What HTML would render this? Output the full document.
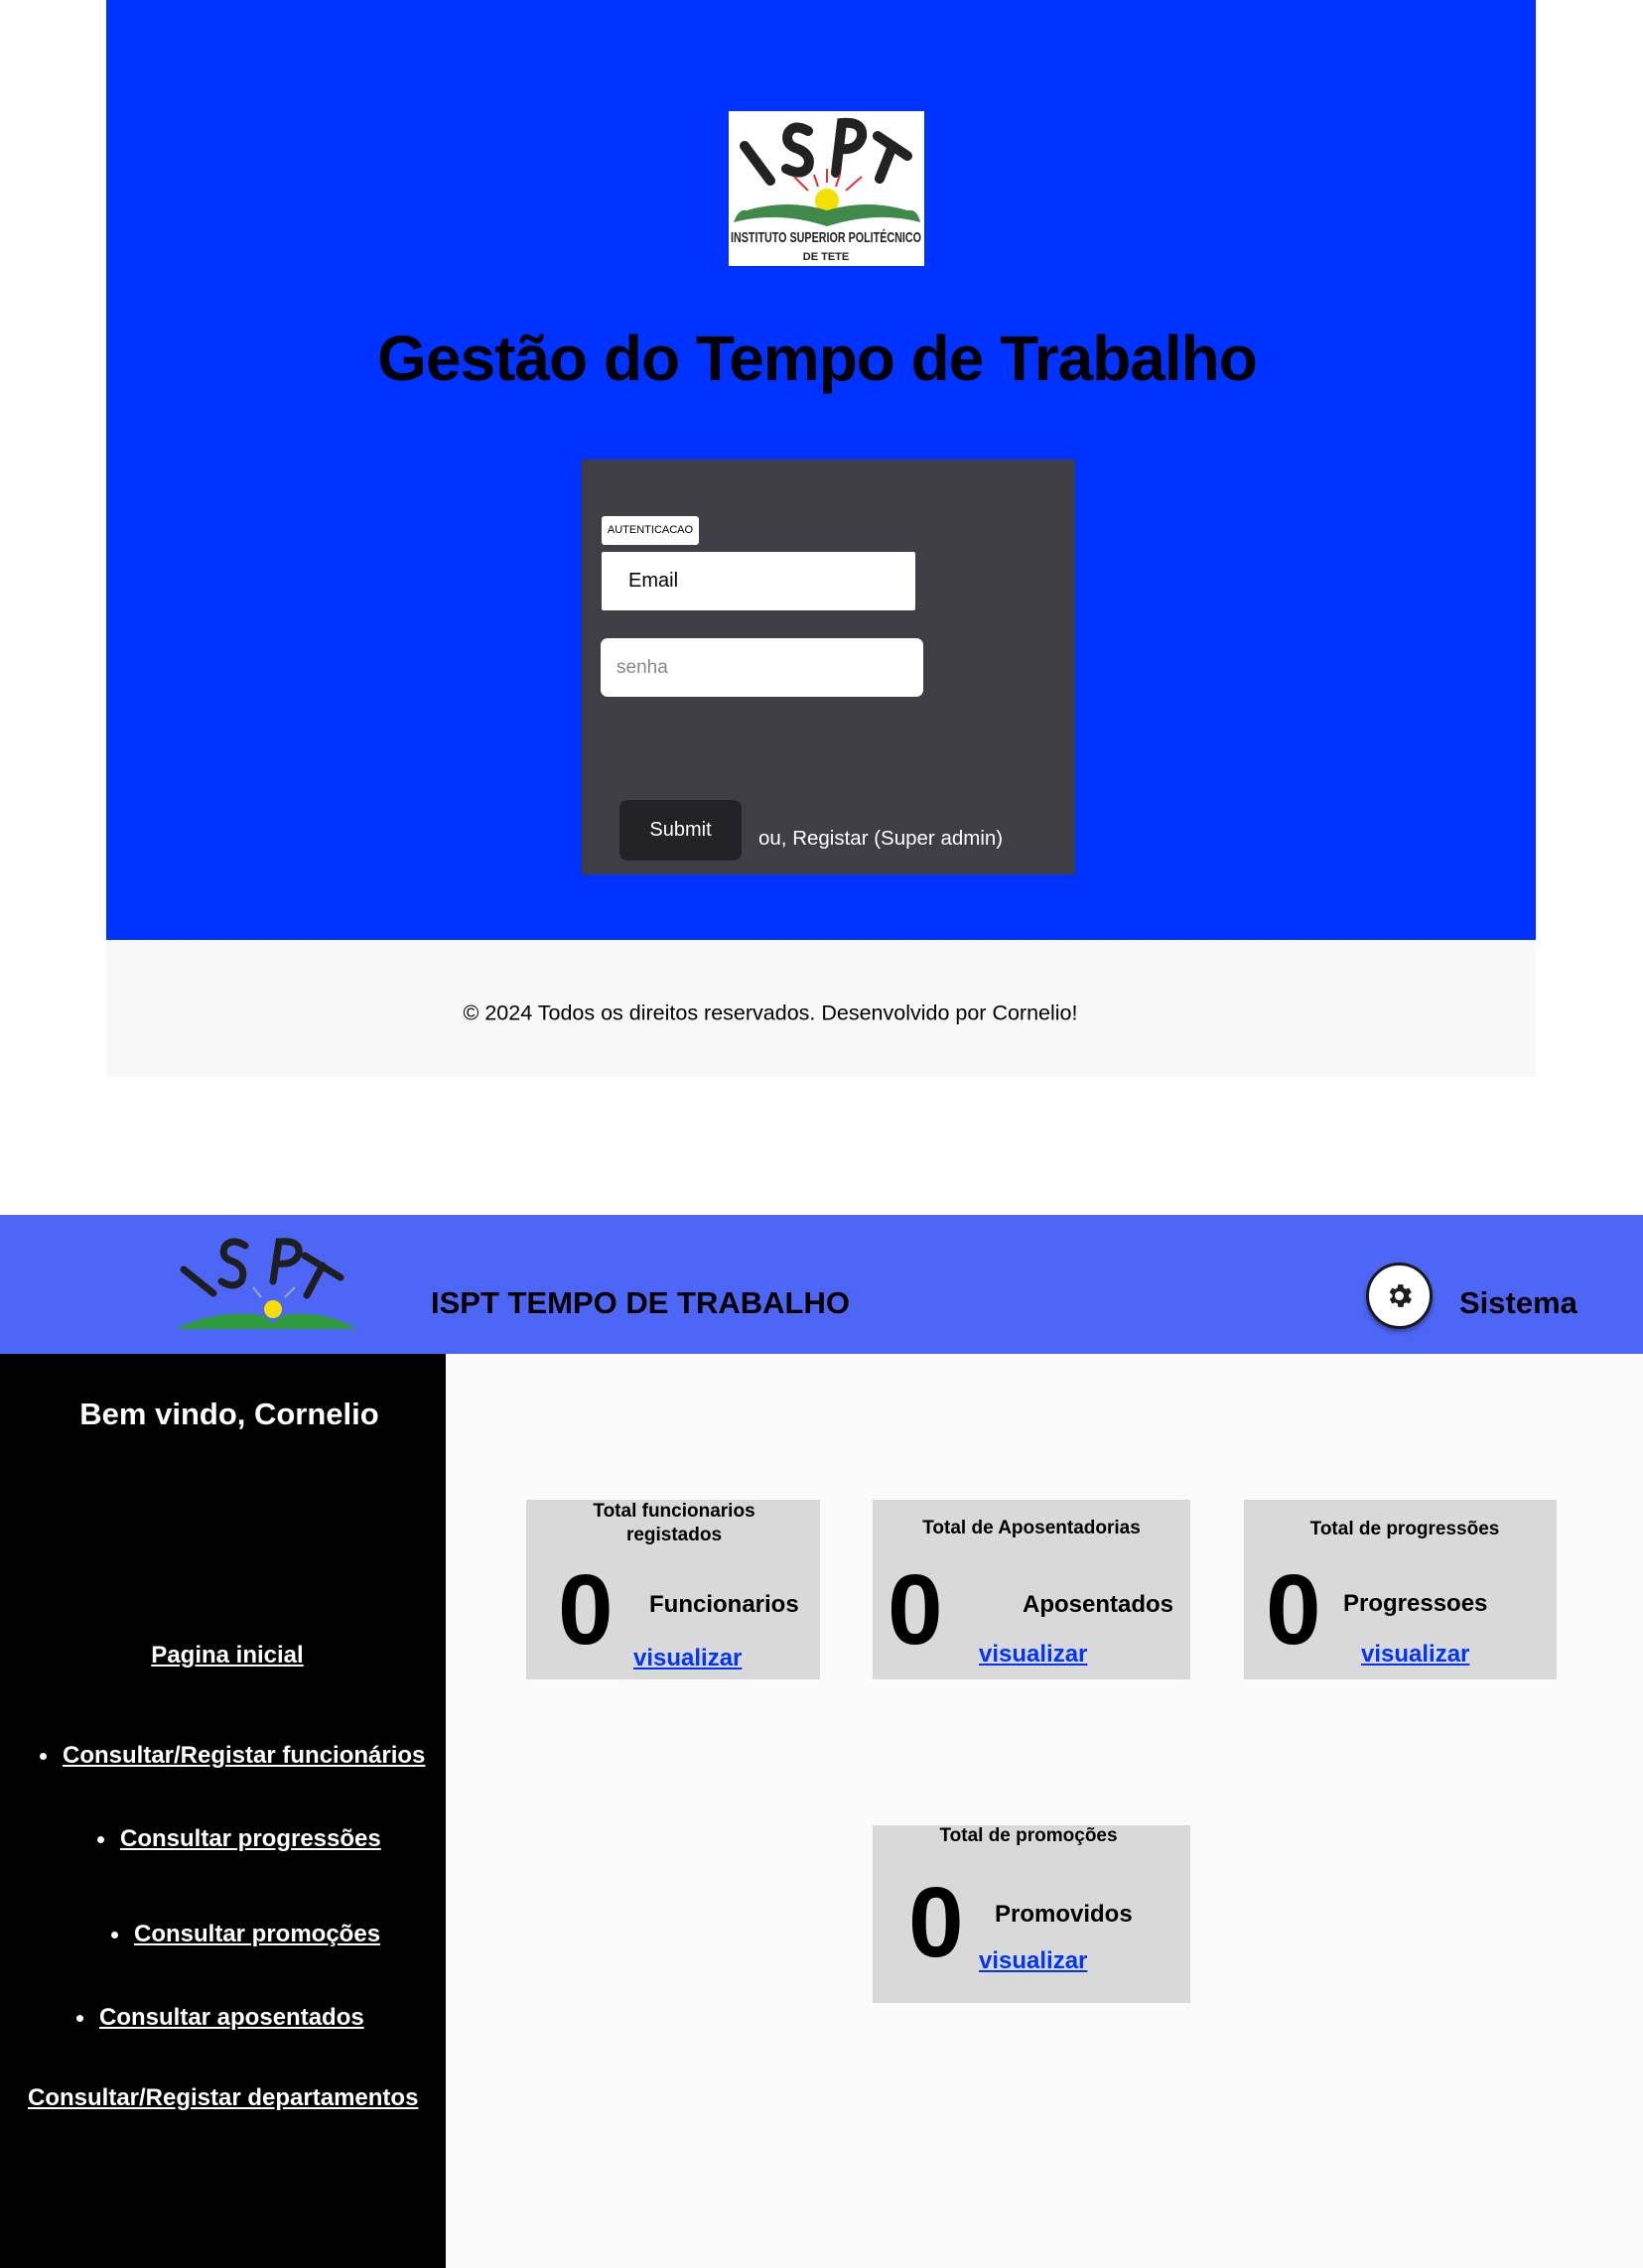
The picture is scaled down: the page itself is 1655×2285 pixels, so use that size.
<!DOCTYPE html>
<html><head><meta charset="utf-8"><style>
*{margin:0;padding:0;box-sizing:border-box}
body{width:1655px;height:2285px;position:relative;background:#fff;font-family:"Liberation Sans",sans-serif;overflow:hidden}
.a{position:absolute}
.c{position:absolute;transform:translate(-50%,-50%);white-space:nowrap;text-align:center}
.l{position:absolute;transform:translateY(-50%);white-space:nowrap}
.card{position:absolute;background:#d9d9d9}
.b{font-weight:bold}
.lnk{color:#0033ff;text-decoration:underline;font-size:24px;font-weight:bold}
.side{color:#fff;text-decoration:underline;font-size:24px;font-weight:bold}
.dot{position:absolute;width:7px;height:7px;border-radius:50%;background:#fff}
</style></head><body>
<div class="a" style="left:107px;top:0;width:1440px;height:947px;background:#0033ff"></div>
<svg class="a" style="left:734px;top:112px" width="197" height="156" viewBox="0 0 197 156">
<rect width="197" height="156" fill="#fff"/>
<g stroke="#222" stroke-width="10" stroke-linecap="round" fill="none">
<line x1="16" y1="35" x2="42" y2="70"/>
<path d="M80 20 Q66 12 60 22 Q56 34 70 38 Q84 44 80 56 Q74 66 58 58"/>
<path d="M108 62 L114 12 Q136 10 134 26 Q130 40 112 38"/>
<line x1="150" y1="25" x2="180" y2="45"/><line x1="165" y1="35" x2="152" y2="68"/>
</g>
<g stroke="#d33" stroke-width="2"><line x1="66" y1="66" x2="80" y2="80"/><line x1="86" y1="64" x2="90" y2="76"/><line x1="99" y1="58" x2="99" y2="72"/><line x1="112" y1="64" x2="108" y2="76"/><line x1="134" y1="66" x2="118" y2="80"/></g>
<circle cx="99" cy="90" r="12" fill="#f5e000"/>
<path d="M5 112 Q10 98 18 100 Q60 88 99 100 Q140 88 180 100 Q190 98 193 112 Q150 100 99 116 Q50 100 5 112Z" fill="#3f8a4a"/>
<text x="98" y="132" text-anchor="middle" font-size="15" font-weight="bold" fill="#222" textLength="192" lengthAdjust="spacingAndGlyphs">INSTITUTO SUPERIOR POLITÉCNICO</text>
<text x="98" y="150" text-anchor="middle" font-size="11" font-weight="bold" fill="#222">DE TETE</text>
</svg>
<div class="c b" style="left:823px;top:361px;font-size:64px;letter-spacing:-1px">Gestão do Tempo de Trabalho</div>
<div class="a" style="left:586px;top:463px;width:497px;height:418px;background:#3e3e44"></div>
<div class="a" style="left:606px;top:520px;width:98px;height:29px;background:#fff;border-radius:3px;font-size:11px;line-height:29px;text-align:center">AUTENTICACAO</div>
<div class="a" style="left:606px;top:556px;width:316px;height:59px;background:#fff;border-radius:2px;font-size:20px;line-height:59px;padding-left:27px">Email</div>
<div class="a" style="left:605px;top:643px;width:325px;height:59px;background:#fff;border-radius:7px;font-size:19px;line-height:59px;padding-left:16px;color:#888">senha</div>
<div class="a" style="left:624px;top:806px;width:123px;height:61px;background:#222227;border-radius:8px;font-size:20px;line-height:61px;text-align:center;color:#fff">Submit</div>
<div class="l" style="left:764px;top:845px;font-size:20.5px;color:#fff">ou, Registar (Super admin)</div>
<div class="a" style="left:107px;top:947px;width:1440px;height:138px;background:#f8f8f8"></div>
<div class="c" style="left:776px;top:1021px;font-size:21.5px">© 2024 Todos os direitos reservados. Desenvolvido por Cornelio!</div>

<div class="a" style="left:0;top:1224px;width:1655px;height:140px;background:#4d66f5"></div>
<svg class="a" style="left:175px;top:1241px" width="190" height="100" viewBox="0 0 190 100">
<g stroke="#1e1e1e" stroke-width="7" stroke-linecap="round" fill="none">
<line x1="10" y1="38" x2="40" y2="62"/>
<path d="M72 14 Q60 6 52 14 Q46 26 60 30 Q74 36 68 50 Q60 58 48 50"/>
<path d="M100 50 L106 10 Q128 8 126 22 Q122 34 104 32"/>
<line x1="132" y1="24" x2="168" y2="46"/><line x1="150" y1="34" x2="134" y2="64"/>
</g>
<g stroke="#9ab" stroke-width="2"><line x1="80" y1="56" x2="88" y2="66"/><line x1="122" y1="56" x2="112" y2="66"/></g>
<circle cx="100" cy="78" r="9" fill="#f3e000"/>
<path d="M2 98 Q40 78 90 84 L100 92 L110 84 Q150 78 185 98Z" fill="#2e9b3c"/>
</svg>
<div class="l b" style="left:434px;top:1313px;font-size:31px;color:#000">ISPT TEMPO DE TRABALHO</div>
<div class="a" style="left:1376px;top:1272px;width:67px;height:67px;border-radius:50%;background:#fff;border:3px solid #1a1a1a;box-shadow:0 3px 5px rgba(0,0,0,.35)"></div>
<svg class="a" style="left:1394px;top:1290px" width="31" height="31" viewBox="0 0 24 24"><path fill="#1e1e1e" d="M19.4 13a7.5 7.5 0 0 0 0-2l2.1-1.6-2-3.5-2.5 1a7 7 0 0 0-1.7-1L15 3.2h-4l-.4 2.7a7 7 0 0 0-1.7 1l-2.5-1-2 3.5L6.6 11a7.5 7.5 0 0 0 0 2l-2.1 1.6 2 3.5 2.5-1a7 7 0 0 0 1.7 1l.4 2.7h4l.4-2.7a7 7 0 0 0 1.7-1l2.5 1 2-3.5zM12 15.5A3.5 3.5 0 1 1 12 8.5a3.5 3.5 0 0 1 0 7z"/></svg>
<div class="l b" style="left:1470px;top:1313px;font-size:31px">Sistema</div>

<div class="a" style="left:0;top:1364px;width:449px;height:921px;background:#000"></div>
<div class="a" style="left:449px;top:1364px;width:1206px;height:921px;background:#fbfbfb"></div>
<div class="c b" style="left:231px;top:1425px;font-size:31px;color:#fff">Bem vindo, Cornelio</div>
<div class="c side" style="left:229px;top:1668px">Pagina inicial</div>
<div class="dot" style="left:40px;top:1766px"></div><div class="l side" style="left:63px;top:1769px">Consultar/Registar funcionários</div>
<div class="dot" style="left:98px;top:1850px"></div><div class="l side" style="left:121px;top:1853px">Consultar progressões</div>
<div class="dot" style="left:112px;top:1946px"></div><div class="l side" style="left:135px;top:1949px">Consultar promoções</div>
<div class="dot" style="left:77px;top:2030px"></div><div class="l side" style="left:100px;top:2033px">Consultar aposentados</div>
<div class="l side" style="left:28px;top:2114px">Consultar/Registar departamentos</div>

<div class="card" style="left:530px;top:1511px;width:296px;height:181px"></div>
<div class="card" style="left:879px;top:1511px;width:320px;height:181px"></div>
<div class="card" style="left:1253px;top:1511px;width:315px;height:181px"></div>
<div class="card" style="left:879px;top:1839px;width:320px;height:179px"></div>

<div class="c b" style="left:679px;top:1535px;font-size:19px;line-height:24px">Total funcionarios<br>registados</div>
<div class="l b" style="left:562px;top:1622px;font-size:100px;line-height:1">0</div>
<div class="l b" style="left:654px;top:1617px;font-size:24px">Funcionarios</div>
<div class="l lnk" style="left:638px;top:1671px">visualizar</div>

<div class="c b" style="left:1039px;top:1540px;font-size:19px">Total de Aposentadorias</div>
<div class="l b" style="left:894px;top:1622px;font-size:100px;line-height:1">0</div>
<div class="l b" style="left:1030px;top:1617px;font-size:24px">Aposentados</div>
<div class="l lnk" style="left:986px;top:1667px">visualizar</div>

<div class="c b" style="left:1415px;top:1541px;font-size:19px">Total de progressões</div>
<div class="l b" style="left:1275px;top:1622px;font-size:100px;line-height:1">0</div>
<div class="l b" style="left:1353px;top:1616px;font-size:24px">Progressoes</div>
<div class="l lnk" style="left:1371px;top:1667px">visualizar</div>

<div class="c b" style="left:1036px;top:1850px;font-size:19px">Total de promoções</div>
<div class="l b" style="left:915px;top:1937px;font-size:100px;line-height:1">0</div>
<div class="l b" style="left:1002px;top:1929px;font-size:24px">Promovidos</div>
<div class="l lnk" style="left:986px;top:1976px">visualizar</div>
</body></html>
